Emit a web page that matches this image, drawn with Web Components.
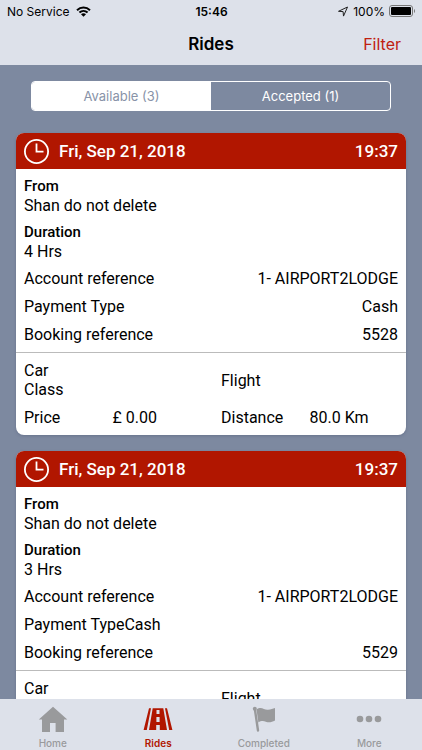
<!DOCTYPE html>
<html lang="en">
<head>
<meta charset="utf-8">
<meta name="viewport" content="width=device-width, initial-scale=1">
<title>Rides</title>
<style>
  body { margin: 0; background: #7d89a0; font-family: Inter, "Liberation Sans", sans-serif; color: #000; }
</style>
</head>
<body>
<rides-app>
  <status-bar slot="top"></status-bar>
  <nav-bar slot="top" heading="Rides" action="Filter"></nav-bar>
  <segment-control>
    <segment-button selected>Available (3)</segment-button>
    <segment-button>Accepted (1)</segment-button>
  </segment-control>
  <ride-card date="Fri, Sep 21, 2018" time="19:37">
    <ride-field label="From">Shan do not delete</ride-field>
    <ride-field label="Duration">4 Hrs</ride-field>
    <ride-row label="Account reference">1- AIRPORT2LODGE</ride-row>
    <ride-row label="Payment Type">Cash</ride-row>
    <ride-row label="Booking reference">5528</ride-row>
    <ride-fact slot="facts" label="Car Class"></ride-fact>
    <ride-fact slot="facts" label="Flight"></ride-fact>
    <ride-fact slot="facts" label="Price">£ 0.00</ride-fact>
    <ride-fact slot="facts" label="Distance">80.0 Km</ride-fact>
  </ride-card>
  <ride-card date="Fri, Sep 21, 2018" time="19:37">
    <ride-field label="From">Shan do not delete</ride-field>
    <ride-field label="Duration">3 Hrs</ride-field>
    <ride-row label="Account reference">1- AIRPORT2LODGE</ride-row>
    <ride-row label="Payment Type" packed>Cash</ride-row>
    <ride-row label="Booking reference">5529</ride-row>
    <ride-fact slot="facts" label="Car Class"></ride-fact>
    <ride-fact slot="facts" label="Flight"></ride-fact>
  </ride-card>
  <tab-bar slot="bottom">
    <tab-item icon="home">Home</tab-item>
    <tab-item icon="road" current>Rides</tab-item>
    <tab-item icon="flag">Completed</tab-item>
    <tab-item icon="more">More</tab-item>
  </tab-bar>
</rides-app>

<script>
const define = (name, render) => customElements.define(name, class extends HTMLElement {
  connectedCallback() {
    if (this.shadowRoot) return;
    this.attachShadow({ mode: "open" }).innerHTML = render(this);
  }
});
const attr = (el, name) => el.getAttribute(name) || "";

define("rides-app", () => `
  <style>
    :host { display: flex; flex-direction: column; height: 100vh; }
    header, footer { flex: none; background: #dde1ea; }
    main { flex: 1; min-height: 0; overflow: hidden; padding: 16px 16px 0; }
    .list { display: flex; flex-direction: column; gap: 16px; }
  </style>
  <header><slot name="top"></slot></header>
  <main><div class="list"><slot></slot></div></main>
  <footer><slot name="bottom"></slot></footer>`);

define("status-bar", () => `
  <style>
    :host { display: grid; grid-template-columns: 1fr auto 1fr; align-items: center; height: 22px; padding: 0 6px 0 7px; font-size: 12px; }
    .side { display: flex; align-items: center; gap: 6px; }
    .end { justify-content: flex-end; gap: 4px; }
    .time { font-weight: 600; }
    svg { display: block; }
  </style>
  <div class="side"><span>No Service</span>
    <svg width="15" height="11" viewBox="0 0 15 11" fill="none" stroke="#000" stroke-width="2" aria-hidden="true">
      <path d="M1 4.2C4.7.7 10.3.7 14 4.2"/><path d="M3.4 6.6c2.4-2.2 5.8-2.2 8.2 0"/><path d="M7.5 10.8 5 8.3c1.4-1.3 3.6-1.3 5 0z" fill="#000" stroke="none"/>
    </svg>
  </div>
  <span class="time">15:46</span>
  <div class="side end">
    <svg width="12" height="11" viewBox="0 0 12 11" fill="none" stroke="#222" stroke-width="1" stroke-linejoin="round" aria-hidden="true"><path d="M10.5 1 1.5 5.3l4.6.3.4 4.5z"/></svg>
    <span>100%</span>
    <svg width="27" height="12" viewBox="0 0 27 12" aria-hidden="true"><rect x=".5" y=".5" width="23" height="11" rx="2.5" fill="none" stroke="#777"/><rect x="2" y="2" width="20" height="8" rx="1"/><path d="M25 4c1.4.5 1.4 3.500 0 4z" fill="#777"/></svg>
  </div>`);

define("nav-bar", el => `
  <style>
    :host { display: grid; grid-template-columns: 1fr auto 1fr; align-items: center; height: 43px; padding: 0 21px; }
    h1 { grid-column: 2; margin: 0; font-size: 17px; line-height: 20px; font-weight: 600; }
    button { justify-self: end; border: 0; padding: 0; background: none; color: #c02010; font: inherit; font-size: 16px; line-height: 20px; cursor: pointer; }
  </style>
  <h1>${attr(el, "heading")}</h1><button type="button">${attr(el, "action")}</button>`);

define("segment-control", () => `
  <style>
    :host { display: flex; height: 28px; margin: 0 15px 6px; border: 1px solid #fff; border-radius: 4px; overflow: hidden; }
  </style>
  <slot></slot>`);

define("segment-button", el => `
  <style>
    :host { display: flex; flex: 1; }
    button { flex: 1; border: 0; padding: 0; background: none; color: #fff; font: inherit; font-size: 13px; cursor: pointer; }
    button[aria-pressed="true"] { background: #fff; color: #8893a8; }
  </style>
  <button type="button" aria-pressed="${el.hasAttribute("selected")}"><slot></slot></button>`);

define("ride-card", el => `
  <style>
    :host { display: block; border-radius: 8px; overflow: hidden; background: #fff; box-shadow: 0 1px 3px #4a567066; font-family: Roboto, "Liberation Sans", sans-serif; font-size: 16px; line-height: 19px; }
    header { display: flex; align-items: center; gap: 10px; height: 36px; padding: 0 8px; background: #b11600; color: #fff; font-size: 17px; font-weight: 500; }
    time:last-child { margin-left: auto; }
    .details { display: flex; flex-direction: column; gap: 8px; padding: 8px; }
    .facts { display: grid; grid-template-columns: 1fr 1fr; gap: 9px 20px; align-items: center; padding: 8px; border-top: 1px solid #bbb; }
  </style>
  <header>
    <svg width="25" height="25" viewBox="0 0 25 25" fill="none" stroke="#fff" stroke-width="1.800" aria-hidden="true"><circle cx="12.500" cy="12.500" r="11.600"/><path d="M12.500 4.500v8.200h7"/></svg>
    <time>${attr(el, "date")}</time><time>${attr(el, "time")}</time>
  </header>
  <div class="details"><slot></slot></div>
  <div class="facts"><slot name="facts"></slot></div>`);

define("ride-field", el => `
  <style>:host { display: block; } .label { font-size: 15px; font-weight: 500; }</style>
  <div class="label">${attr(el, "label")}</div><div><slot></slot></div>`);

define("ride-row", el => `
  <style>
    :host { display: flex; justify-content: space-between; margin-bottom: 1px; }
    :host([packed]) { justify-content: flex-start; }
    :host(:last-of-type) { margin-bottom: 0; }
  </style>
  <span>${attr(el, "label")}</span><span><slot></slot></span>`);

define("ride-fact", el => `
  <style>
    :host { display: grid; grid-template-columns: 1fr 1fr; align-items: center; }
    .label { width: min-content; }
  </style>
  <span class="label">${attr(el, "label")}</span><span><slot></slot></span>`);

define("tab-bar", () => `
  <style>
    :host { display: block; }
    nav { display: grid; grid-template-columns: repeat(4, 1fr); height: 51px; }
  </style>
  <nav aria-label="Main"><slot></slot></nav>`);

const icons = {
  home: `<path d="M15 .8 .8 13.500H4V26h8v-9h5.600v9H26V13.500h3.300z"/>`,
  road: `<path fill-rule="evenodd" d="M9.700 2.300h10.600L24 24H6zM13.500 4v4h3V4zM13.400 11v5h3.200v-5zM13.200 19v5h3.600v-5z"/><path d="M6 2.300h2L3.800 24H.6zM22 2.300h2L29.400 24h-3.200z"/>`,
  flag: `<path d="M6 4 9 24.500" stroke="currentColor" stroke-width="2.400" stroke-linecap="round"/><circle cx="5.800" cy="2.700" r="2"/><path d="M7.500 3.500c5-3.600 7.500.8 11.500.3 2.800-.4 4.900-1.300 7-1.800v12.500c-3.200 1.800-6.200 2.500-9.200 1.200-2.500-1-5.200-.9-7.400.9z"/>`,
  more: `<circle cx="6" cy="13" r="3.300"/><circle cx="15" cy="13" r="3.300"/><circle cx="24" cy="13" r="3.300"/>`
};
define("tab-item", el => `
  <style>
    :host { display: block; color: #999a9c; }
    :host([current]) { color: #b11600; }
    a { display: flex; flex-direction: column; align-items: center; gap: 3px; padding-top: 7px; color: inherit; text-decoration: none; font-size: 10px; line-height: 14px; font-weight: 500; }
    :host([current]) a { font-weight: 600; }
    svg { display: block; }
  </style>
  <a href="#${attr(el, "icon")}"><svg width="30" height="27" viewBox="0 0 30 27" fill="currentColor" aria-hidden="true">${icons[attr(el, "icon")]}</svg><span><slot></slot></span></a>`);
</script>
</body>
</html>
